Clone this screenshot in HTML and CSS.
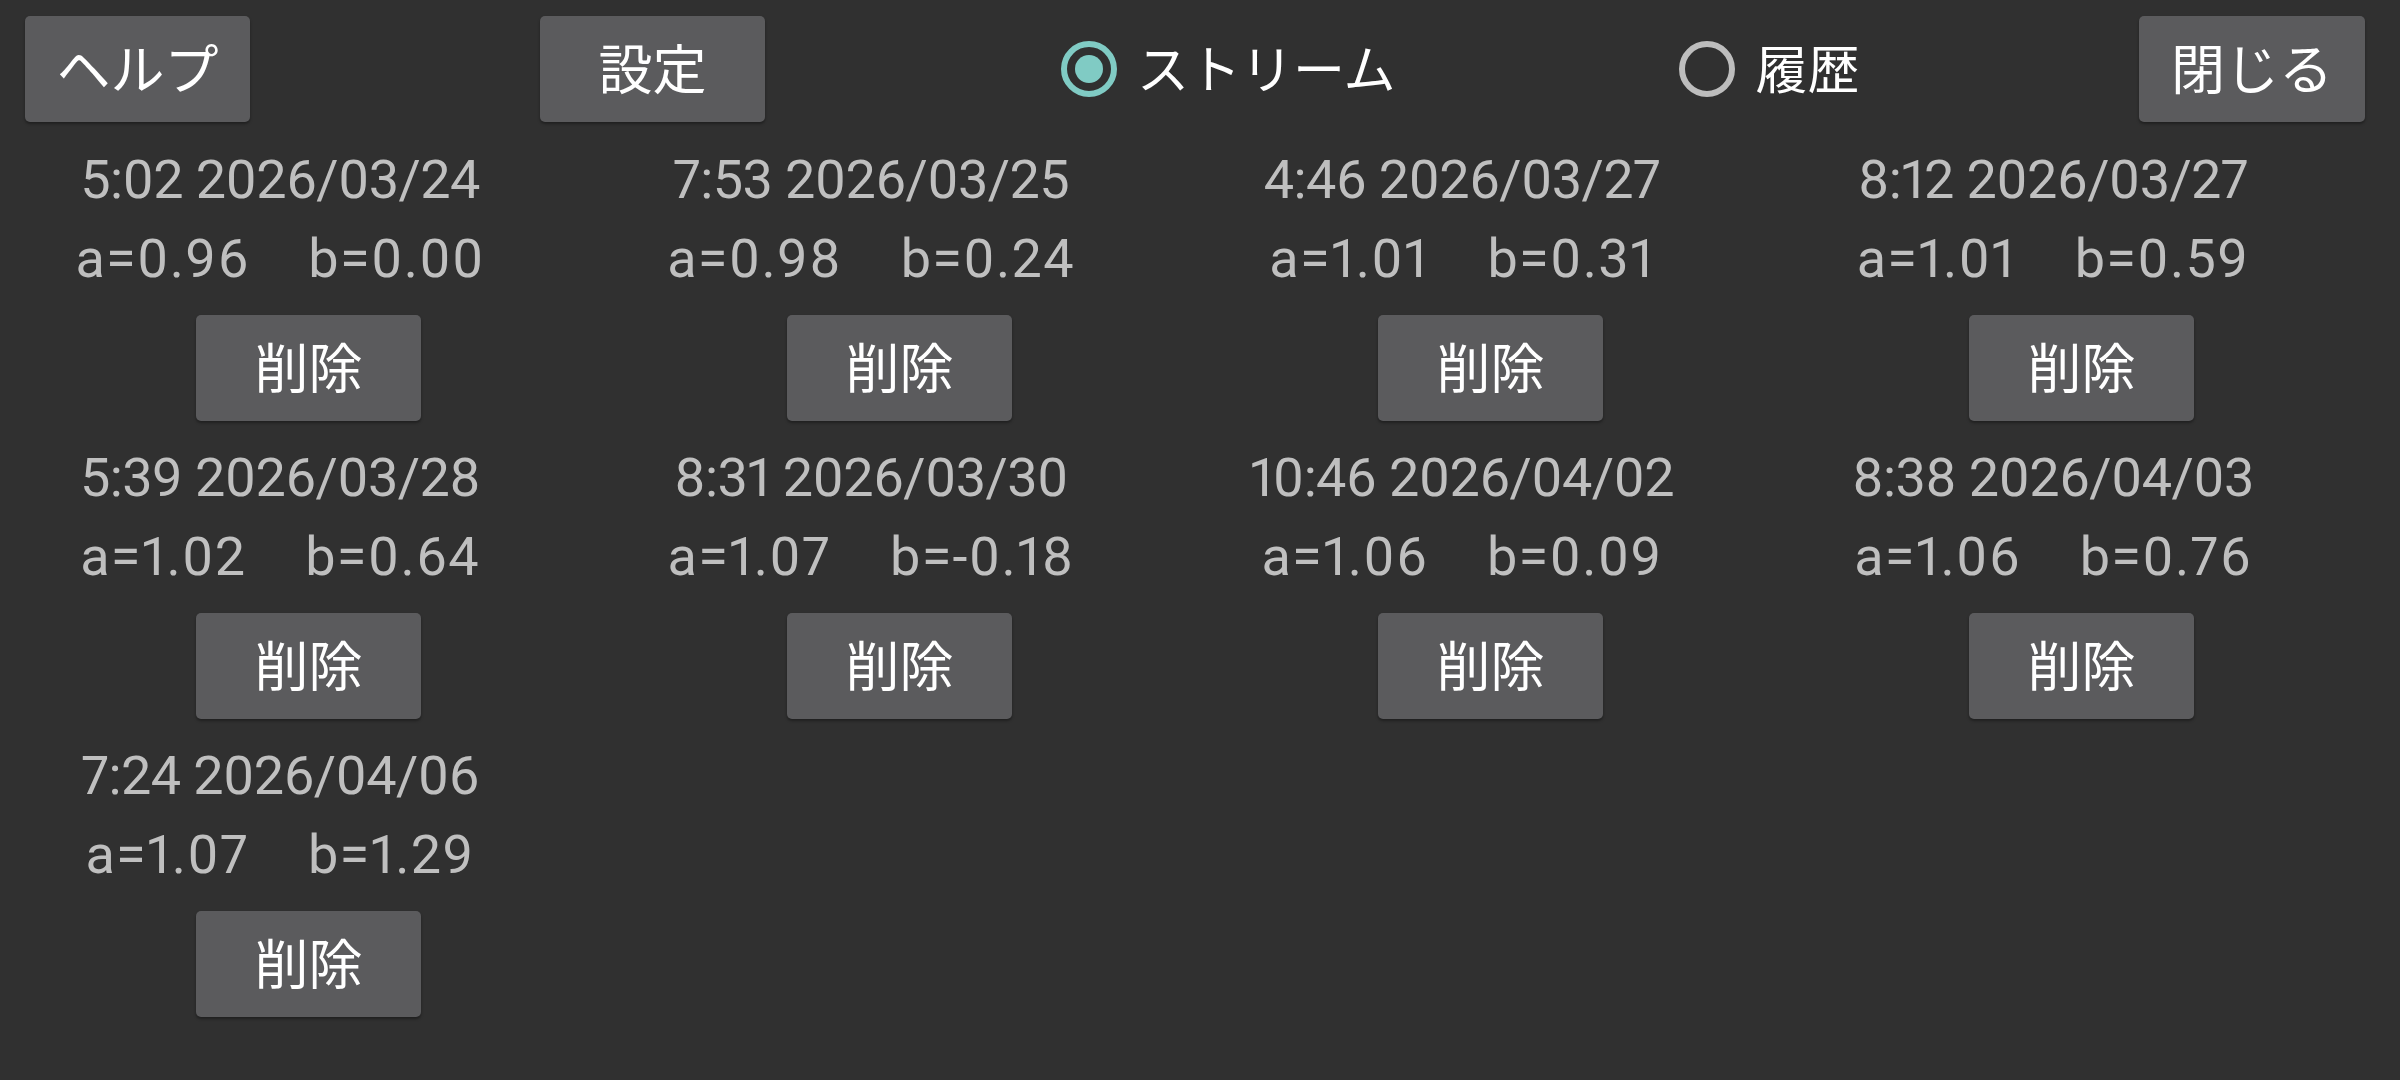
FILE: index.html
```html
<!DOCTYPE html>
<html lang="ja">
<head>
<meta charset="utf-8">
<title>ストリーム</title>
<link rel="stylesheet" href="styles.css">
</head>
<body>
<div class="screen">
  <header class="topbar">
    <button class="btn btn-help">ヘルプ</button>
    <button class="btn btn-settings">設定</button>
    <label class="radio radio-stream">
      <span class="ring checked"><span class="dot"></span></span>
      <span class="radio-label">ストリーム</span>
    </label>
    <label class="radio radio-history">
      <span class="ring"></span>
      <span class="radio-label">履歴</span>
    </label>
    <button class="btn btn-close">閉じる</button>
  </header>

  <main class="grid">
    <div class="entry">
      <div class="info"><div class="date">5:02 2026/03/24</div><div class="vals">a=0.96    b=0.00</div></div>
      <button class="btn btn-del">削除</button>
    </div>
    <div class="entry">
      <div class="info"><div class="date">7:53 2026/03/25</div><div class="vals">a=0.98    b=0.24</div></div>
      <button class="btn btn-del">削除</button>
    </div>
    <div class="entry">
      <div class="info"><div class="date">4:46 2026/03/27</div><div class="vals">a=1.01    b=0.31</div></div>
      <button class="btn btn-del">削除</button>
    </div>
    <div class="entry">
      <div class="info"><div class="date">8:12 2026/03/27</div><div class="vals">a=1.01    b=0.59</div></div>
      <button class="btn btn-del">削除</button>
    </div>
    <div class="entry">
      <div class="info"><div class="date">5:39 2026/03/28</div><div class="vals">a=1.02    b=0.64</div></div>
      <button class="btn btn-del">削除</button>
    </div>
    <div class="entry">
      <div class="info"><div class="date">8:31 2026/03/30</div><div class="vals">a=1.07    b=-0.18</div></div>
      <button class="btn btn-del">削除</button>
    </div>
    <div class="entry">
      <div class="info"><div class="date">10:46 2026/04/02</div><div class="vals">a=1.06    b=0.09</div></div>
      <button class="btn btn-del">削除</button>
    </div>
    <div class="entry">
      <div class="info"><div class="date">8:38 2026/04/03</div><div class="vals">a=1.06    b=0.76</div></div>
      <button class="btn btn-del">削除</button>
    </div>
    <div class="entry">
      <div class="info"><div class="date">7:24 2026/04/06</div><div class="vals">a=1.07    b=1.29</div></div>
      <button class="btn btn-del">削除</button>
    </div>
  </main>
</div>
</body>
</html>
```

FILE: styles.css
```css
* {
  box-sizing: border-box;
}

html, body {
  margin: 0;
  padding: 0;
  background: #303030;
}

body {
  width: 2400px;
  height: 1080px;
  overflow: hidden;
  font-family: "Noto Sans CJK JP", "Noto Sans", sans-serif;
}

.screen {
  width: 2400px;
  height: 1080px;
  background: #303030;
}

.topbar {
  display: flex;
  align-items: center;
  height: 106px;
  margin-top: 16px;
  padding-left: 25px;
  padding-right: 35px;
}

.btn {
  display: flex;
  align-items: center;
  justify-content: center;
  width: 225px;
  height: 106px;
  padding: 0 0 4px 0;
  border: none;
  border-radius: 5px;
  background: #5b5b5d;
  color: #ffffff;
  font-family: "Noto Sans CJK JP", "Noto Sans", sans-serif;
  font-size: 54px;
  line-height: 1;
  box-shadow: 0 2px 3px rgba(0, 0, 0, 0.35);
  cursor: pointer;
}

.btn-settings {
  margin-left: 290px;
}

.btn-close {
  margin-left: auto;
  width: 226px;
}

.radio {
  display: flex;
  align-items: center;
  height: 106px;
  color: #ffffff;
  font-size: 52px;
  line-height: 1;
}

.radio-stream {
  margin-left: 296px;
}

.radio-history {
  margin-left: 284px;
}

.ring {
  display: flex;
  align-items: center;
  justify-content: center;
  width: 56px;
  height: 56px;
  border: 6px solid #bdbdbd;
  border-radius: 50%;
  flex: none;
}

.ring.checked {
  border-color: #80cbc4;
}

.dot {
  width: 28px;
  height: 28px;
  border-radius: 50%;
  background: #80cbc4;
}

.radio-label {
  margin-left: 20px;
  padding-bottom: 4px;
}

.grid {
  display: grid;
  grid-template-columns: repeat(4, 591px);
  row-gap: 17px;
  margin-top: 18px;
  padding-left: 13px;
}

.entry {
  display: flex;
  flex-direction: column;
  align-items: center;
}

.info {
  padding-right: 57px;
  text-align: center;
  color: #bfbfbf;
  font-family: Roboto, "Liberation Sans", sans-serif;
  font-size: 54px;
  line-height: 79px;
  font-variant-numeric: proportional-nums;
}

.date {
  white-space: nowrap;
  letter-spacing: -0.6px;
}

.vals {
  white-space: pre;
  letter-spacing: 1.3px;
}

.btn-del {
  margin-top: 17px;
}
```
